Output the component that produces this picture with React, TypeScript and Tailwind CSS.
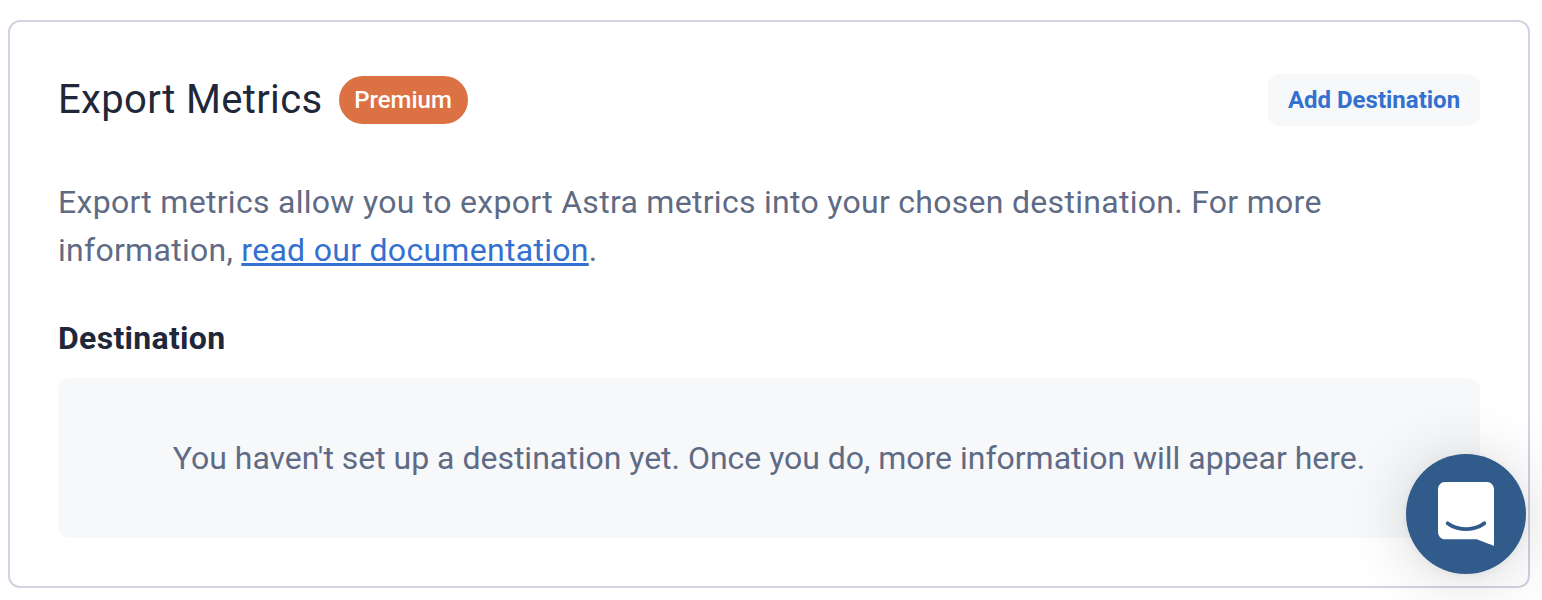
export default function App() {
  return (
    <div className="h-[600px] overflow-hidden bg-white pl-2 pr-3 pt-5 font-['Roboto',sans-serif]">
      <section className="h-[568px] rounded-xl border-2 border-[#d0d3e0] px-12 pt-[52px]">
        <header className="flex h-[52px] items-center justify-between">
          <div className="flex items-center gap-4">
            <h1 className="whitespace-nowrap text-[40px] leading-[48px] tracking-[0.36px] text-[#1f273a]">Export Metrics</h1>
            <span className="flex h-12 w-[129px] items-center justify-center whitespace-nowrap rounded-full bg-[#dc7144] text-2xl font-medium text-white">Premium</span>
          </div>
          <button className="h-[52px] w-[212px] whitespace-nowrap rounded-xl bg-[#f7f8fa] text-2xl font-bold text-[#3470d0]">Add Destination</button>
        </header>
        <p className="mt-[52px] whitespace-nowrap text-[32px] leading-[48px] tracking-[0.29px] text-[#5f6b85]">
          Export metrics allow you to export Astra metrics into your chosen destination. For more
          <br />
          information, <a href="#" className="text-[#3470d0] underline">read our documentation</a>.
        </p>
        <h2 className="mt-10 text-[32px] font-bold leading-[48px] tracking-[0.29px] text-[#1f273a]">Destination</h2>
        <div className="mt-4 flex h-40 items-center justify-center whitespace-nowrap rounded-xl bg-[#f7f8fa] text-[32px] tracking-[-0.015px] text-[#5f6b85]">
          You haven't set up a destination yet. Once you do, more information will appear here.
        </div>
      </section>
      <button aria-label="Open chat" className="fixed bottom-[26px] right-4 flex size-[120px] items-center justify-center rounded-full bg-[#305b8a] shadow-[0_4px_64px_rgba(0,0,0,0.16),0_2px_12px_rgba(0,0,0,0.06)]">
        <svg width="56" height="64" viewBox="0 0 28 32">
          <path fill="white" d="M28 32s-4.714-1.855-8.527-3.34H3.437C1.54 28.66 0 27.026 0 25.013V3.644C0 1.633 1.54 0 3.437 0h21.125c1.898 0 3.437 1.632 3.437 3.645v18.404H28V32zm-4.139-11.982a.88.88 0 00-1.292-.105c-.03.026-3.015 2.681-8.57 2.681-5.486 0-8.517-2.636-8.571-2.684a.88.88 0 00-1.29.107 1.01 1.01 0 00-.219.708.992.992 0 00.318.664c.142.128 3.537 3.15 9.762 3.15 6.226 0 9.621-3.022 9.763-3.15a.992.992 0 00.317-.664 1.01 1.01 0 00-.218-.707z" />
        </svg>
      </button>
    </div>
  );
}
